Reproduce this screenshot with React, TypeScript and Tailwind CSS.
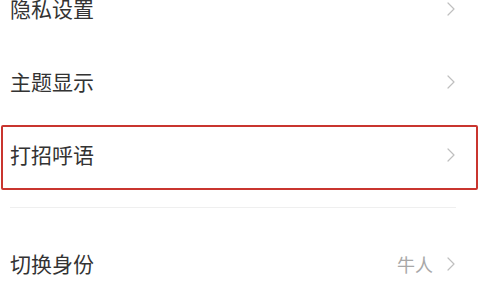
const font = { fontFamily: '"Noto Sans CJK SC", "Noto Sans", sans-serif' };

function Chevron() {
  return (
    <svg width="8" height="14" viewBox="0 0 8 14" fill="none" className="shrink-0">
      <polyline points="1,1 7,7 1,13" stroke="#bfbfbf" strokeWidth="1.2" strokeLinejoin="round" strokeLinecap="round" />
    </svg>
  );
}

function Row({ label, value, highlight }: { label: string; value?: string; highlight?: boolean }) {
  return (
    <div className="relative flex h-[73px] items-center justify-between pl-[10px] pr-[30px]">
      <span className="text-[21px] leading-none text-[#333333]">{label}</span>
      <div className="flex items-center gap-[14px]">
        {value && <span className="text-[18px] leading-none text-[#a8a8a8]">{value}</span>}
        <Chevron />
      </div>
      {highlight && (
        <div className="pointer-events-none absolute top-[7px] bottom-[1px] left-[1px] right-[7px] rounded-[2px] border-2 border-[#c9352f]" />
      )}
    </div>
  );
}

export default function App() {
  return (
    <div className="h-[293px] w-[485px] overflow-hidden bg-white" style={font}>
      <div className="-mt-[28px]">
        <Row label="隐私设置" />
        <Row label="主题显示" />
        <Row label="打招呼语" highlight />
        <div className="mt-[16px] ml-[10px] mr-[29px] h-px bg-[#efefef]" />
        <div className="mt-[19px]">
          <Row label="切换身份" value="牛人" />
        </div>
      </div>
    </div>
  );
}
